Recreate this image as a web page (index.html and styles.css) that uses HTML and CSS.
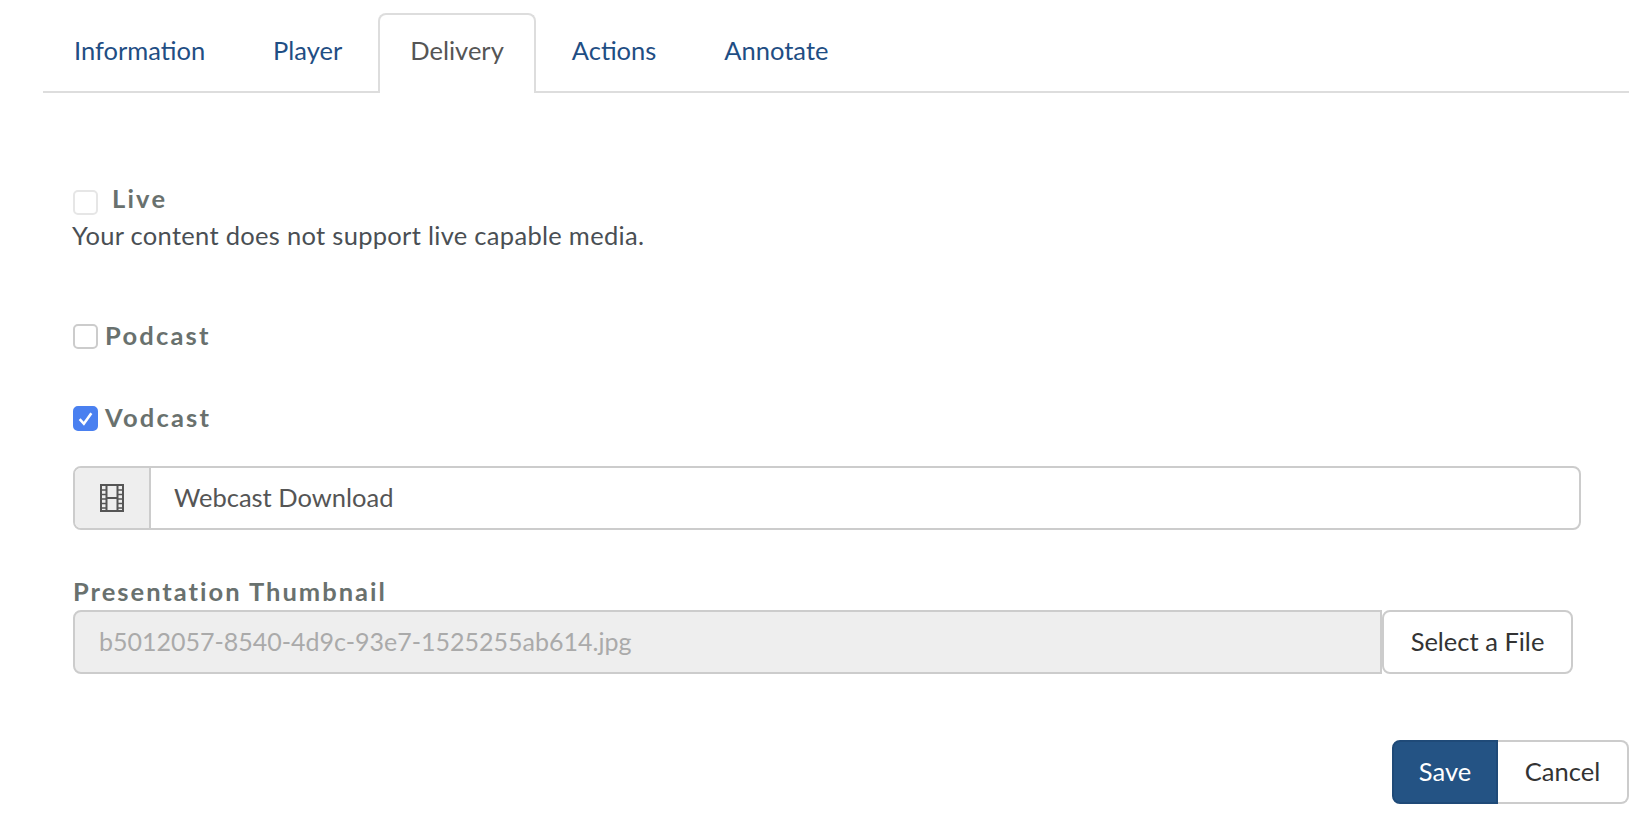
FILE: index.html
```html
<!DOCTYPE html>
<html lang="en">
<head>
  <meta charset="UTF-8">
  <title>Presentation Delivery</title>
  <link rel="stylesheet" href="styles.css">
</head>
<body>
  <!-- Tabs -->
  <nav class="tabs">
    <a class="tab">Information</a>
    <a class="tab">Player</a>
    <a class="tab active">Delivery</a>
    <a class="tab">Actions</a>
    <a class="tab">Annotate</a>
  </nav>

  <form class="panel">
    <!-- Live -->
    <section class="live">
      <div class="check-row">
        <span class="box box-disabled"></span>
        <span class="check-label live-label">Live</span>
      </div>
      <p class="help">Your content does not support live capable media.</p>
    </section>

    <!-- Podcast -->
    <div class="check-row podcast">
      <span class="box"></span>
      <span class="check-label">Podcast</span>
    </div>

    <!-- Vodcast -->
    <div class="check-row vodcast">
      <span class="box box-checked">
        <svg width="21" height="21" viewBox="0 0 18 18"><path d="M4 9.5 L7.600 13.500 L14 4.600" fill="none" stroke="#fff" stroke-width="2.200"/></svg>
      </span>
      <span class="check-label">Vodcast</span>
    </div>

    <div class="input-group">
      <span class="addon">
        <svg width="24" height="28" viewBox="0 0 24 28">
          <rect x="1" y="1" width="22" height="26" fill="none" stroke="#555" stroke-width="2"/>
          <path d="M6.5 1V27M17.5 1V27M6.5 14H17.5" fill="none" stroke="#555" stroke-width="2"/>
          <path d="M1 6H6M1 10.500H6M1 15H6M1 19.500H6M1 24H6M18 6H23M18 10.500H23M18 15H23M18 19.500H23M18 24H23" fill="none" stroke="#555" stroke-width="1.600"/>
        </svg>
      </span>
      <span class="group-text">Webcast Download</span>
    </div>

    <!-- Thumbnail -->
    <label class="field-label">Presentation Thumbnail</label>
    <div class="file-row">
      <span class="file-name">b5012057-8540-4d9c-93e7-1525255ab614.jpg</span>
      <button type="button" class="btn btn-file">Select a File</button>
    </div>

    <div class="actions">
      <button type="button" class="btn btn-save">Save</button>
      <button type="button" class="btn btn-cancel">Cancel</button>
    </div>
  </form>
</body>
</html>
```

FILE: styles.css
```css
body {
  margin: 0;
  padding: 13px 23px 0 43px;
  background-color: #fff;
  color: #4a4f54;
  font-family: Lato, Arial, sans-serif;
  font-size: 25.5px;
}
.tabs {
  display: flex;
  gap: 4px;
  height: 78px;
  border-bottom: 2px solid #ddd;
}
.tab {
  display: flex;
  align-items: center;
  height: 78px;
  padding: 0 30px 6px;
  color: #1f4e84;
  border: 2px solid transparent;
  border-bottom: none;
  box-sizing: border-box;
}
.tab:first-child {
  padding-left: 29px;
}
.tab.active {
  height: 80px;
  padding-bottom: 8px;
  color: #555;
  background-color: #fff;
  border-color: #ddd;
  border-radius: 8px 8px 0 0;
}
.panel {
  padding: 93px 0 0 30px;
}
.check-row {
  display: flex;
  align-items: center;
  height: 26px;
}
.box {
  display: flex;
  align-items: center;
  justify-content: center;
  box-sizing: border-box;
  width: 25px;
  height: 25px;
  border: 2px solid #ccc;
  border-radius: 5px;
  background-color: #fff;
}
.box-disabled {
  margin-top: 6px;
  border-color: #e6e6e6;
}
.box-checked {
  background-color: #4a80f0;
  border-color: #4a80f0;
}
.check-label {
  margin-left: 7px;
  padding-bottom: 2px;
  color: #69716e;
  font-weight: 700;
  letter-spacing: 2.200px;
}
.live-label {
  margin-left: 14px;
}
.help {
  margin: 9px 0 0 -1px;
  line-height: 28px;
  letter-spacing: 0.3px;
}
.podcast {
  margin-top: 74px;
}
.vodcast {
  margin-top: 56px;
}
.input-group {
  display: flex;
  align-items: stretch;
  width: 1508px;
  height: 64px;
  margin-top: 35px;
  box-sizing: border-box;
  border: 2px solid #ccc;
  border-radius: 8px;
  overflow: hidden;
}
.addon {
  display: flex;
  align-items: center;
  justify-content: center;
  width: 74px;
  background-color: #eee;
  border-right: 2px solid #ccc;
}
.group-text {
  display: flex;
  align-items: center;
  padding: 0 0 2px 23px;
  color: #555;
}
.field-label {
  display: block;
  margin-top: 47px;
  color: #69716e;
  font-weight: 700;
  letter-spacing: 2px;
  line-height: 28px;
}
.file-row {
  display: flex;
  height: 64px;
  margin-top: 5px;
}
.file-name {
  display: flex;
  align-items: center;
  width: 1309px;
  padding: 0 0 2px 24px;
  box-sizing: border-box;
  background-color: #eee;
  border: 2px solid #ccc;
  border-radius: 8px 0 0 8px;
  color: #aaa;
  font-size: 25px;
}
.btn {
  box-sizing: border-box;
  height: 64px;
  padding: 0 0 2px;
  font-family: inherit;
  font-size: 25.5px;
  color: #333;
  background-color: #fff;
  border: 2px solid #ccc;
}
.btn-file {
  width: 191px;
  border-radius: 8px;
}
.actions {
  display: flex;
  justify-content: flex-end;
  margin-top: 66px;
}
.btn-save {
  width: 106px;
  color: #fff;
  background-color: #245384;
  border-color: #1f4a78;
  border-radius: 8px 0 0 8px;
}
.btn-cancel {
  width: 131px;
  border-left: none;
  border-radius: 0 8px 8px 0;
}
```
